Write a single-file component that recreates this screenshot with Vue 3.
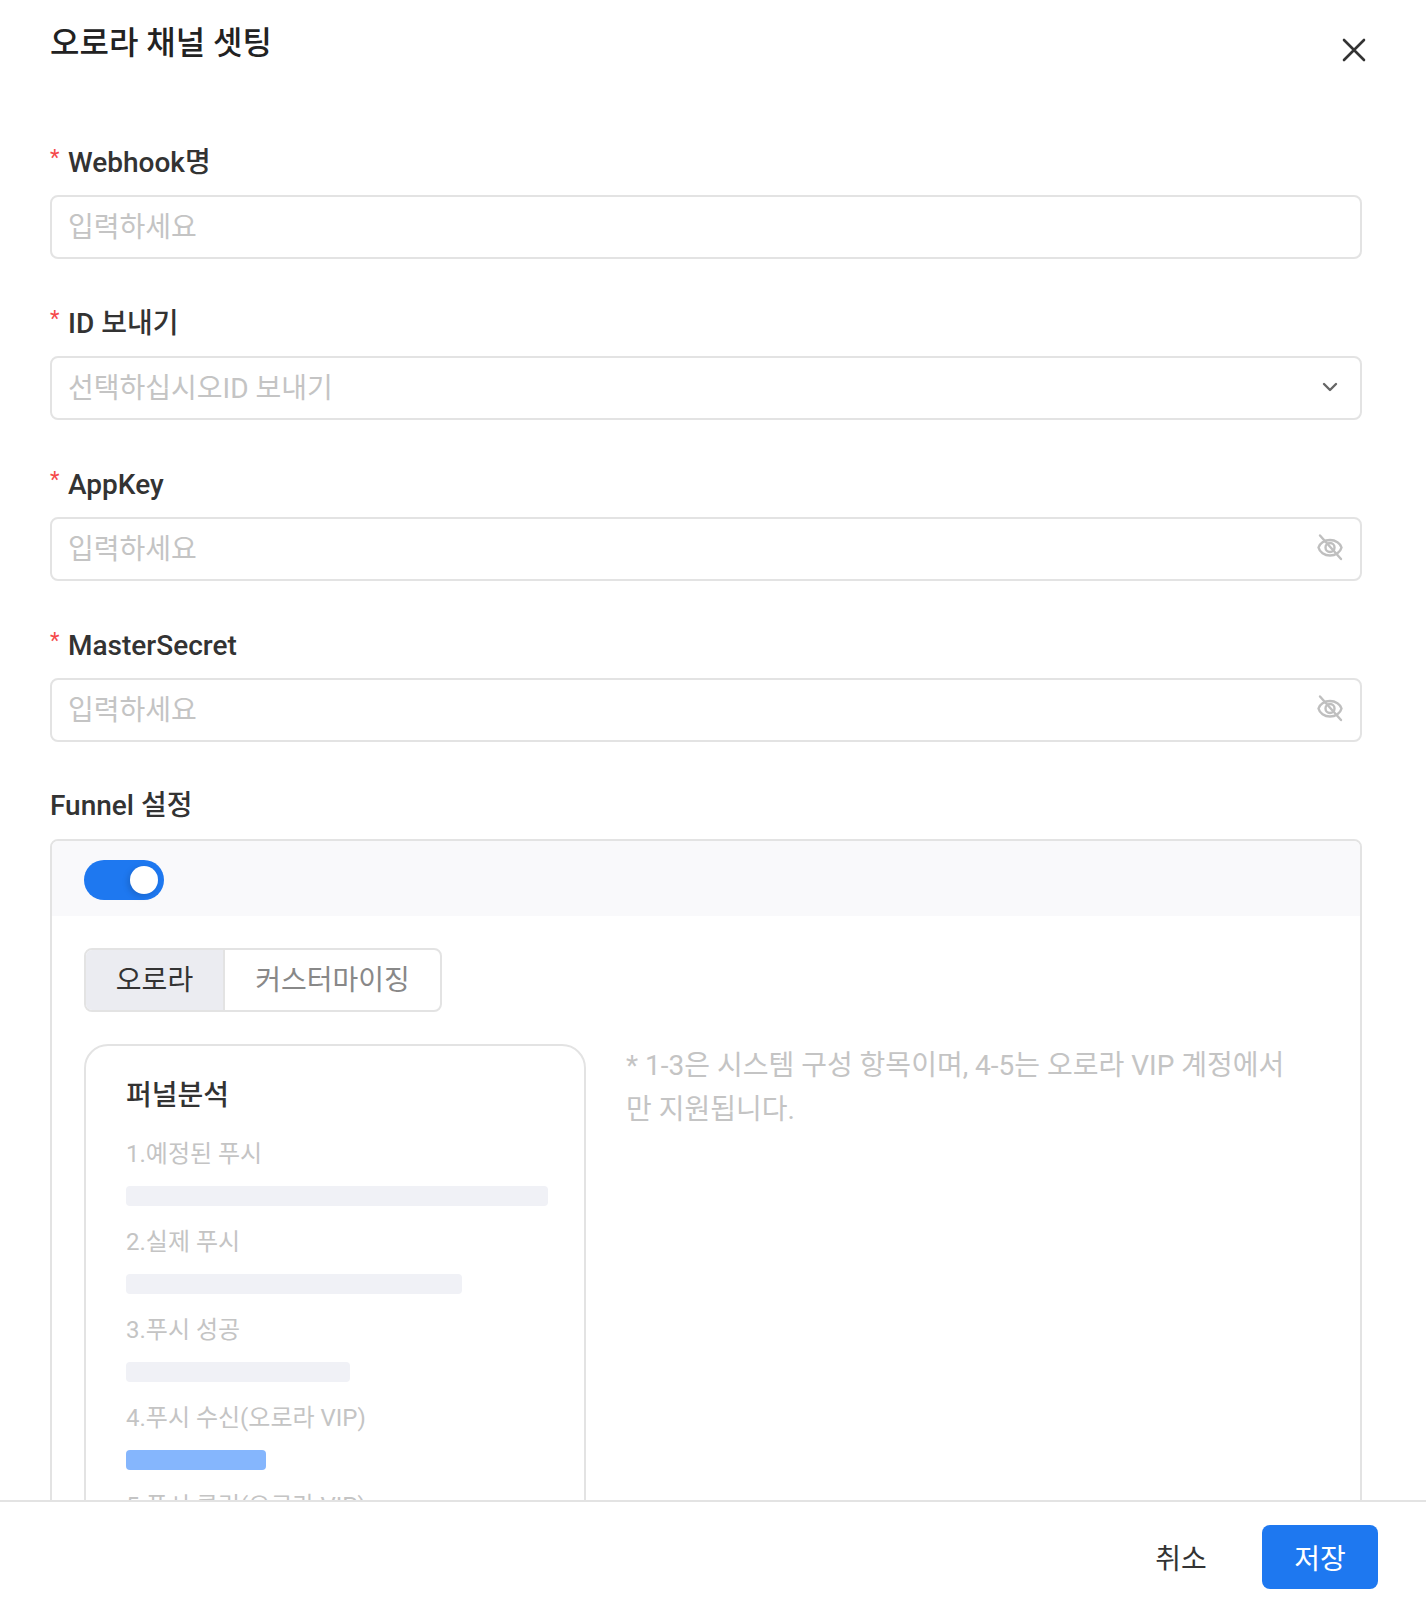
<script setup>
const fields = [
  { label: 'Webhook명', placeholder: '입력하세요', icon: null },
  { label: 'ID 보내기', placeholder: '선택하십시오ID 보내기', icon: 'chevron' },
  { label: 'AppKey', placeholder: '입력하세요', icon: 'eye' },
  { label: 'MasterSecret', placeholder: '입력하세요', icon: 'eye' },
]
const rows = [
  { label: '1.예정된 푸시', width: 422, vip: false },
  { label: '2.실제 푸시', width: 336, vip: false },
  { label: '3.푸시 성공', width: 224, vip: false },
  { label: '4.푸시 수신(오로라 VIP)', width: 140, vip: true },
  { label: '5.푸시 클릭(오로라 VIP)', width: 90, vip: true },
]
</script>

<template>
  <div class="dialog">
    <div class="scroll">
      <header class="head">
        <h1 class="title">오로라 채널 셋팅</h1>
        <svg class="close" width="24" height="24" viewBox="0 0 24 24" fill="none" stroke="#333" stroke-width="2.6" stroke-linecap="round">
          <path d="M2 2 22 22M22 2 2 22" />
        </svg>
      </header>

      <div v-for="f in fields" :key="f.label" class="field">
        <div class="label"><span class="req">*</span><span>{{ f.label }}</span></div>
        <div class="input">
          <span class="ph">{{ f.placeholder }}</span>
          <svg v-if="f.icon === 'chevron'" class="icon chevron" width="26" height="26" viewBox="0 0 26 26" fill="none" stroke="#666" stroke-width="2.4" stroke-linecap="round" stroke-linejoin="round">
            <path d="M7 11 13 17 19 11" />
          </svg>
          <svg v-if="f.icon === 'eye'" class="icon eye" width="28" height="28" viewBox="0 0 28 28" fill="none" stroke="#bfbfbf" stroke-width="2.4" stroke-linecap="round" stroke-linejoin="round">
            <path d="M2.500 14.500C3.500 10.500 8.500 7 14 7S24.500 10.500 25.500 14.500C24.500 19 19.500 22.500 14 22.500S3.500 19 2.500 14.500Z" />
            <circle cx="14" cy="14.500" r="4.500" />
            <path d="M4 2.500 25 26" />
          </svg>
        </div>
      </div>

      <div class="label funnel-label"><span>Funnel 설정</span></div>
      <section class="box">
        <div class="box-head">
          <div class="switch"><span class="knob"></span></div>
        </div>
        <div class="box-body">
          <div class="tabs">
            <div class="tab active"><span>오로라</span></div>
            <div class="tab"><span>커스터마이징</span></div>
          </div>
          <div class="columns">
            <div class="card">
              <div class="card-title">퍼널분석</div>
              <div v-for="r in rows" :key="r.label" class="row">
                <div class="row-label">{{ r.label }}</div>
                <div class="bar" :class="{ vip: r.vip }" :style="{ width: r.width + 'px' }"></div>
              </div>
            </div>
            <p class="note">* 1-3은 시스템 구성 항목이며, 4-5는 오로라 VIP 계정에서만 지원됩니다.</p>
          </div>
        </div>
      </section>
    </div>

    <footer class="foot">
      <button class="btn cancel">취소</button>
      <button class="btn primary">저장</button>
    </footer>
  </div>
</template>

<style>
html, body { margin: 0; background: #fff; }
</style>

<style scoped>
.dialog {
  width: 1426px;
  height: 1608px;
  display: flex;
  flex-direction: column;
  overflow: hidden;
  background: #fff;
  font-family: Roboto, "Noto Sans CJK KR", sans-serif;
  color: #333;
}
.scroll {
  height: 1500px;
  flex: none;
  overflow: hidden;
  padding: 0 64px 0 50px;
  box-sizing: border-box;
}
.head {
  display: flex;
  justify-content: space-between;
  align-items: flex-start;
  height: 142px;
}
.title {
  margin: 21px 0 0;
  font-size: 32px;
  line-height: 44px;
  font-weight: 500;
  color: #222;
}
.close {
  margin: 38px -4px 0 0;
}
.field {
  margin-bottom: 44px;
}
.label {
  display: flex;
  align-items: center;
  box-sizing: border-box;
  height: 40px;
  padding-top: 2px;
  line-height: 40px;
  margin-bottom: 13px;
  font-size: 28px;
  font-weight: 500;
  color: #333;
}
.req {
  width: 18px;
  color: #f5494a;
  font-size: 22px;
  font-weight: 400;
  line-height: 1;
  align-self: flex-start;
  margin-top: 3px;
}
.input {
  height: 64px;
  box-sizing: border-box;
  border: 2px solid #e3e3e3;
  border-radius: 8px;
  padding: 0 16px;
  display: flex;
  align-items: center;
  justify-content: space-between;
  font-size: 28px;
  line-height: 40px;
}
.ph { color: #c4c4c4; margin-top: 2px; }
.icon { flex: none; }
.chevron { margin: -5px 1px 0 0; }
.eye { margin: -4px 0 0 0; }
.funnel-label {
  margin-top: -1px;
  margin-bottom: 14px;
}
.box {
  border: 2px solid #e3e3e3;
  border-radius: 8px;
  height: 800px;
  overflow: hidden;
}
.box-head {
  height: 75px;
  background: #f9f9fb;
  padding: 19px 32px 0;
  box-sizing: border-box;
}
.switch {
  width: 80px;
  height: 40px;
  border-radius: 20px;
  background: #1e78f0;
  display: flex;
  align-items: center;
  justify-content: flex-end;
  padding-right: 6px;
  box-sizing: border-box;
}
.knob {
  width: 28px;
  height: 28px;
  border-radius: 50%;
  background: #fff;
  box-shadow: -2px 2px 6px rgba(0, 0, 0, 0.15);
}
.box-body {
  padding: 32px 32px 0;
}
.tabs {
  display: inline-flex;
  height: 64px;
  box-sizing: border-box;
  border: 2px solid #e3e3e3;
  border-radius: 8px;
  overflow: hidden;
  font-size: 28px;
  line-height: 40px;
  vertical-align: top;
}
.tab {
  display: flex;
  align-items: center;
  justify-content: center;
  width: 215px;
  padding-top: 2px;
  box-sizing: border-box;
  color: #888;
}
.tab.active {
  width: 139px;
  background: #ebecf1;
  color: #333;
  border-right: 2px solid #e3e3e3;
}
.columns {
  display: flex;
  align-items: flex-start;
  gap: 40px;
  margin-top: 32px;
}
.card {
  flex: none;
  width: 502px;
  height: 640px;
  box-sizing: border-box;
  border: 2px solid #e3e3e3;
  border-radius: 24px;
  padding: 30px 36px 0 40px;
}
.card-title {
  font-size: 28px;
  font-weight: 500;
  line-height: 40px;
  color: #333;
  margin-bottom: 18px;
}
.row {
  height: 88px;
  box-sizing: border-box;
  padding-top: 2px;
}
.row-label {
  font-size: 24px;
  line-height: 36px;
  height: 36px;
  margin-bottom: 14px;
  color: #c4c4c4;
  white-space: nowrap;
}
.bar {
  height: 20px;
  border-radius: 4px;
  background: #f0f1f6;
}
.bar.vip {
  background: #85b6fd;
}
.note {
  width: 670px;
  margin: 0;
  font-size: 28px;
  line-height: 44px;
  color: #c4c4c4;
}
.foot {
  flex: none;
  height: 108px;
  box-sizing: border-box;
  border-top: 2px solid #e3e3e3;
  padding: 23px 48px 0;
  display: flex;
  justify-content: flex-end;
  gap: 23px;
}
.btn {
  width: 116px;
  height: 64px;
  border: none;
  border-radius: 8px;
  background: transparent;
  font: inherit;
  font-size: 28px;
  color: #333;
  padding: 0;
}
.btn.primary {
  background: #1e78f0;
  color: #fff;
}
</style>
